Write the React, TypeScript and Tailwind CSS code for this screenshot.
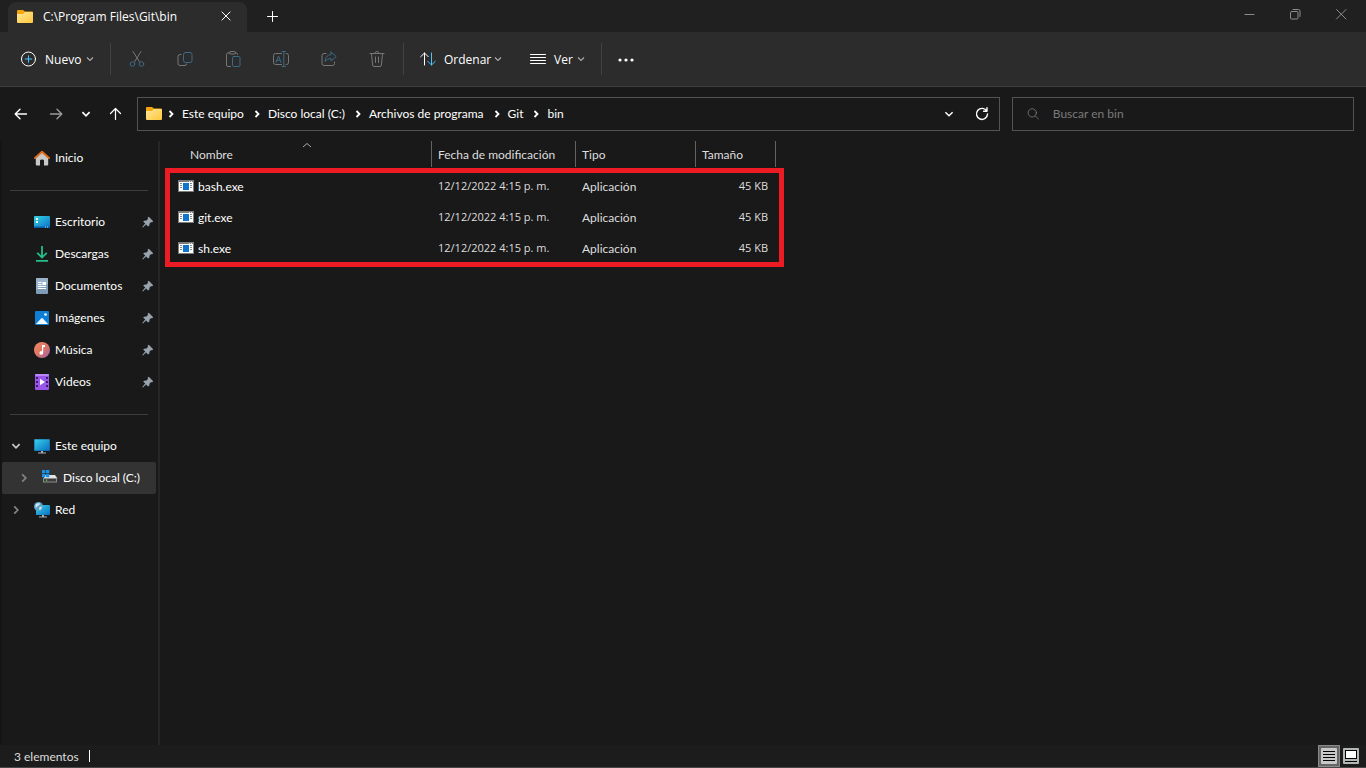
import React from "react";
import { clsx } from "clsx";

/**
 * File explorer window
 * ====================
 * Tab strip, command bar, address row, navigation pane and details list.
 */

type IconProps = { className?: string };

// Line icons share the same 16px frame
function Line({ className, children, width = 1 }: IconProps & { children: React.ReactNode; width?: number }) {
  return (
    <svg
      viewBox="0 0 16 16"
      className={clsx("shrink-0", className, !className?.includes("size-") && "size-4")}
      fill="none"
      stroke="currentColor"
      strokeWidth={width}
      strokeLinecap="round"
      strokeLinejoin="round"
      aria-hidden="true"
    >
      {children}
    </svg>
  );
}

function Chevron({ className, dir = "down", width = 1.2 }: IconProps & { dir?: "down" | "right" | "up"; width?: number }) {
  const paths = {
    down: "M2 3.5 5 6.5 8 3.5",
    right: "M3.5 2 6.5 5 3.5 8",
    up: "M1 6 5 2.5 9 6",
  };
  return (
    <svg
      viewBox="0 0 10 10"
      className={clsx("shrink-0", className, !className?.includes("size-") && "size-2.5")}
      fill="none"
      stroke="currentColor"
      strokeWidth={width}
      aria-hidden="true"
    >
      <path d={paths[dir]} />
    </svg>
  );
}

function FolderIcon() {
  return (
    <svg viewBox="0 0 16 14" className="h-3.5 w-4 shrink-0" aria-hidden="true">
      <defs>
        <linearGradient id="folder" x1="0" y1="0" x2="1" y2="1">
          <stop offset="0" stopColor="#ffe69a" />
          <stop offset="1" stopColor="#ffc73a" />
        </linearGradient>
      </defs>
      <path d="M0 1Q0 0 1 0H6L8 1.6H15Q16 1.6 16 2.6V6H0Z" fill="#f2a60c" />
      <path d="M0 4H6L8 2H15Q16 2 16 3V12Q16 13 15 13H1Q0 13 0 12Z" fill="url(#folder)" />
    </svg>
  );
}

// Command bar icons
const CutIcon = () => (
  <Line className="text-[#777]">
    <path d="M4 .5 10.3 10.6M12 .5 5.7 10.6" />
    <g stroke="#3a6a86">
      <circle cx="3.5" cy="13" r="2.3" />
      <circle cx="12.5" cy="13" r="2.3" />
    </g>
  </Line>
);

const CopyIcon = () => (
  <Line className="text-[#777]">
    <path d="M4 3.5H3Q1 3.5 1 5.5V12.5Q1 14.5 3 14.5H8Q9.5 14.5 9.5 13" />
    <rect x="6.5" y="1.5" width="8.5" height="10" rx="2" stroke="#3a6a86" />
  </Line>
);

const PasteIcon = () => (
  <Line className="text-[#777]">
    <path d="M5 2H3Q1.5 2 1.5 3.5V14Q1.5 15.5 3 15.5H5.5M10 2H11.5Q12.5 2 12.5 3.5" />
    <rect x="4.5" y=".5" width="6" height="2.5" rx="1" />
    <rect x="7.5" y="5.5" width="7.5" height="10" rx="1.2" stroke="#3a6a86" />
  </Line>
);

const RenameIcon = () => (
  <Line className="text-[#777]">
    <path d="M8.5 2.5H2.5Q.5 2.5 .5 4.5V11.5Q.5 13.5 2.5 13.5H8.5M13 2.5H13.5Q15.5 2.5 15.5 4.5V11.5Q15.5 13.5 13.5 13.5H13" />
    <path d="M3 11.5 5.5 5 8 11.5M3.8 9.3H7.2M10.8 .5V15.5M9 .5H12.5M9 15.5H12.5" stroke="#3a6a86" />
  </Line>
);

const ShareIcon = () => (
  <Line className="text-[#777]">
    <path d="M5 2.5H3Q1 2.5 1 4.5V12.5Q1 14.5 3 14.5H11.5Q13.5 14.5 13.5 12.5V11" />
    <path d="M10 1 15.2 5.5 10 10V7.5Q6.5 7.2 4 10.5 4.2 4.2 10 3.5Z" stroke="#3a6a86" />
  </Line>
);

const TrashIcon = () => (
  <Line className="text-[#777]">
    <path d="M1 2.5H15M5.8 2.5Q6 .5 8 .5T10.2 2.5M2.5 2.5 3.6 14Q3.8 15.5 5 15.5H11Q12.2 15.5 12.4 14L13.5 2.5M6.5 6V11.5M9.5 6V11.5" />
  </Line>
);

// Navigation pane icons
const HomeIcon = () => (
  <svg viewBox="0 0 16 16" className="size-4" aria-hidden="true">
    <path d="M1.8 7 8 1.5 14.2 7V14.5Q14.2 15.5 13.2 15.5H10V10.5Q10 9.5 8 9.5T6 10.5V15.5H2.8Q1.8 15.5 1.8 14.5Z" fill="#c9c9c9" />
    <path d="M1 8 8 1.7 15 8" fill="none" stroke="#e06a1b" strokeWidth="2" strokeLinecap="round" strokeLinejoin="round" />
  </svg>
);

const DesktopIcon = () => (
  <svg viewBox="0 0 16 16" className="size-4" aria-hidden="true">
    <defs>
      <linearGradient id="blue" x1="0" y1="0" x2="1" y2="1">
        <stop offset="0" stopColor="#36d3e6" />
        <stop offset="1" stopColor="#0b6fc4" />
      </linearGradient>
    </defs>
    <rect y="2" width="16" height="12" rx="1" fill="url(#blue)" />
    <path d="M2 4H4V6H2ZM2 7H4V9H2Z" fill="#e8fbff" />
    <path d="M0 12.5H16V13Q16 14 15 14H1Q0 14 0 13Z" fill="#0a5ba8" />
    <path d="M11 13H12M13 13H14" stroke="#9fe0f5" />
  </svg>
);

const DownloadsIcon = () => (
  <svg viewBox="0 0 16 16" className="size-4" fill="none" stroke="#25bd8a" strokeWidth="1.8" aria-hidden="true">
    <path d="M8 0V11.5M3.2 6.8 8 11.6 12.8 6.8M2 14.8H14" />
  </svg>
);

const DocumentsIcon = () => (
  <svg viewBox="0 0 16 16" className="size-4" aria-hidden="true">
    <rect x="2" width="12" height="16" rx="1" fill="#7f9bb8" />
    <path d="M2 1Q2 0 3 0H13Q14 0 14 1V6L2 12Z" fill="#9bb3ca" />
    <path d="M4 4.5H7.5M4 6.5H7.5M4 8.5H12M4 10.5H12" stroke="#fff" />
    <rect x="8.5" y="4" width="3.5" height="3" fill="#fff" />
  </svg>
);

const PicturesIcon = () => (
  <svg viewBox="0 0 16 16" className="size-4" aria-hidden="true">
    <rect x="1" y="1" width="14" height="14" rx="1" fill="#0f7fd6" />
    <path d="M2 14 7.2 8.4Q8 7.7 8.8 8.4L14 14Z" fill="#f2f8ff" />
    <circle cx="11.5" cy="4.5" r="1.3" fill="#fff" />
  </svg>
);

const MusicIcon = () => (
  <svg viewBox="0 0 16 16" className="size-4" aria-hidden="true">
    <defs>
      <linearGradient id="music" x1="0" y1="0" x2="1" y2="1">
        <stop offset="0" stopColor="#f0896a" />
        <stop offset=".5" stopColor="#dd7763" />
        <stop offset="1" stopColor="#9a5eb0" />
      </linearGradient>
    </defs>
    <circle cx="8" cy="8" r="8" fill="url(#music)" />
    <path d="M8 3H11V5H9.2V10.8A1.9 1.9 0 1 1 8 9.2Z" fill="#fff" />
  </svg>
);

const VideosIcon = () => (
  <svg viewBox="0 0 16 16" className="size-4" aria-hidden="true">
    <rect x="1" width="14" height="16" rx="1" fill="#9a55ea" />
    <rect x="1" width="14" height="2" rx="1" fill="#b887f5" />
    <path d="M2 3H4V5H2ZM2 7H4V9H2ZM2 11H4V13H2ZM12 3H14V5H12ZM12 7H14V9H12ZM12 11H14V13H12Z" fill="#3d1a78" />
    <path d="M6 4.8 11 8 6 11.2Z" fill="#fff" />
  </svg>
);

const ComputerIcon = () => (
  <svg viewBox="0 0 16 16" className="size-4" aria-hidden="true">
    <rect y="1" width="16" height="12" rx="1" fill="#14629c" />
    <rect x=".6" y="1.5" width="14.8" height="11" fill="url(#blue)" />
    <path d="M7 13H9V14.5H12V15.5H4V14.5H7Z" fill="#a7b0b8" />
  </svg>
);

const DriveIcon = () => (
  <svg viewBox="0 0 16 16" className="size-4" aria-hidden="true">
    <path d="M3.5 5H13L15.5 8.5H1.5Z" fill="#e4e4e4" />
    <path d="M0 0H3.3V3.3H0ZM4 0H7.3V3.3H4ZM0 4H3.3V7.3H0ZM4 4H7.3V7.3H4Z" fill="#1793ea" />
    <rect x="1" y="8" width="14" height="4.5" rx=".5" fill="#8c8c8c" />
    <rect x="2" y="9" width="12" height="2.5" fill="#3d3d3d" />
    <rect x="4" y="9.5" width="1.2" height="1.3" fill="#5fe04c" />
  </svg>
);

const NetworkIcon = () => (
  <svg viewBox="0 0 16 16" className="size-4" aria-hidden="true">
    <rect x="2" y="3" width="14" height="10" rx="1" fill="url(#blue)" />
    <path d="M8 13H10V14.5H13V15.5H5V14.5H8Z" fill="#a7b0b8" />
    <circle cx="4.5" cy="4.5" r="4.5" fill="#5aa3c8" />
    <path d="M1.5 2.5Q4 0 6 1.5 5.5 3.5 3.5 4 3 6 1.5 5.5ZM5.5 5 8 4.5 7 7.5 5 8Z" fill="#cfe8f2" />
  </svg>
);

const PinIcon = () => (
  <svg viewBox="0 0 12 12" className="size-3 shrink-0" aria-hidden="true">
    <path d="M6.8 .8 11.2 5.2 10.2 6.2 8.8 6.2 7.6 7.6 7.2 9.8 6.2 10.4 4 8.4 1.2 11.2 .4 11.4 .6 10.6 3.2 7.6 1.2 5.6 2 4.8 4.4 4.4 5.8 3.2 5.8 1.6Z" fill="#98a3ad" />
  </svg>
);

const ExeIcon = () => (
  <svg viewBox="0 0 16 14" className="h-3.5 w-4 shrink-0" shapeRendering="crispEdges" aria-hidden="true">
    <rect width="16" height="12" fill="#7d7d7d" />
    <path d="M11 1H12V2H11ZM13 1H14V2H13Z" fill="#ddd" />
    <rect x="1" y="2" width="14" height="9" fill="#fff" />
    <rect x="5" y="3" width="6" height="7" fill="#0e74cc" />
    <path d="M2 3.5H4M2 5.5H4M2 7.5H4M12 3.5H14M12 5.5H14M12 7.5H14" stroke="#8a8a8a" />
  </svg>
);

const editCommands = [
  { label: "Cortar", icon: CutIcon },
  { label: "Copiar", icon: CopyIcon },
  { label: "Pegar", icon: PasteIcon },
  { label: "Cambiar nombre", icon: RenameIcon },
  { label: "Compartir", icon: ShareIcon },
  { label: "Eliminar", icon: TrashIcon },
];

const crumbs = ["Este equipo", "Disco local (C:)", "Archivos de programa", "Git", "bin"];

const quickAccess = [
  { name: "Escritorio", icon: DesktopIcon },
  { name: "Descargas", icon: DownloadsIcon },
  { name: "Documentos", icon: DocumentsIcon },
  { name: "Imágenes", icon: PicturesIcon },
  { name: "Música", icon: MusicIcon },
  { name: "Videos", icon: VideosIcon },
];

const files = ["bash.exe", "git.exe", "sh.exe"].map((name) => ({
  name,
  date: "12/12/2022 4:15 p. m.",
  type: "Aplicación",
  size: "45 KB",
}));

function TitleBar() {
  return (
    <header className="flex h-8 shrink-0 items-end bg-[#202020] pl-2 font-['Open_Sans',sans-serif]">
      <div className="flex h-[30px] w-[239px] items-center rounded-t-lg bg-[#2c2c2c] pr-4 pl-[9px]">
        <FolderIcon />
        <span className="ml-2.5 flex-1 font-medium text-white">C:\Program Files\Git\bin</span>
        <button aria-label="Cerrar pestaña" className="pb-0.5 text-white">
          <Line className="size-2.5" width={1.6}>
            <path d="M1.5 1.5 14.5 14.5M14.5 1.5 1.5 14.5" />
          </Line>
        </button>
      </div>
      <button aria-label="Nueva pestaña" className="ml-4.5 flex h-[30px] items-center text-white">
        <Line>
          <path d="M7.5 2.5V12.5M2.5 7.5H12.5" />
        </Line>
      </button>
      <div className="ml-auto flex h-8 items-center gap-[30px] pr-[17px] pb-1 text-[#8b8b8b]">
        <button aria-label="Minimizar">
          <Line>
            <path d="M4 8.5H13" />
          </Line>
        </button>
        <button aria-label="Restaurar">
          <Line>
            <rect x="3.5" y="5.5" width="7.5" height="7.5" rx="1" />
            <path d="M6 3.5H11.5Q13 3.5 13 5V10.5" />
          </Line>
        </button>
        <button aria-label="Cerrar">
          <Line>
            <path d="M3.5 3.5 13 13M13 3.5 3.5 13" />
          </Line>
        </button>
      </div>
    </header>
  );
}

const Divider = () => <span className="h-8 w-px bg-[#424242]" />;

function CommandBar() {
  return (
    <div className="flex h-[55px] shrink-0 items-center border-b border-[#3d3d3d] bg-[#2c2c2c] pl-[21px] font-['Open_Sans',sans-serif] font-medium text-white">
      <button className="flex items-center">
        <Line>
          <circle cx="7.5" cy="8" r="7" />
          <path d="M7.5 4.7V11.3M4.2 8H10.8" stroke="#4cc2ff" />
        </Line>
        <span className="ml-2 w-10 pt-px text-left">Nuevo</span>
        <Chevron className="text-[#aaa]" />
      </button>
      <div className="ml-[15px] flex">
        <Divider />
      </div>
      <div className="flex gap-8 px-[18px]">
        {editCommands.map(({ label, icon: Icon }) => (
          <button key={label} aria-label={label} disabled>
            <Icon />
          </button>
        ))}
      </div>
      <Divider />
      <button className="ml-4 flex items-center">
        <Line>
          <path d="M4.5 14V2M.7 5.7 4.5 2 8.2 5.7" />
          <path d="M11.5 2V14M7.8 10.3 11.5 14 15.3 10.3" stroke="#4cc2ff" />
        </Line>
        <span className="ml-2 w-[49px] pt-px text-left">Ordenar</span>
        <Chevron className="text-[#aaa]" />
      </button>
      <button className="ml-[27px] flex items-center">
        <Line>
          <path d="M.5 3.5H15.5M.5 6.5H15.5M.5 9.5H15.5M.5 12.5H15.5" />
        </Line>
        <span className="ml-2 w-[22px] pt-px text-left">Ver</span>
        <Chevron className="text-[#aaa]" />
      </button>
      <div className="mr-4 ml-[15px] flex">
        <Divider />
      </div>
      <button aria-label="Ver más">
        <svg viewBox="0 0 16 16" className="size-4" fill="currentColor" aria-hidden="true">
          <circle cx="2" cy="9" r="1.6" />
          <circle cx="8" cy="9" r="1.6" />
          <circle cx="14" cy="9" r="1.6" />
        </svg>
      </button>
    </div>
  );
}

function AddressRow() {
  return (
    <div className="flex h-[54px] shrink-0 items-center px-3 text-white">
      <button aria-label="Atrás">
        <Line width={1.4}>
          <path d="M14.5 8H3.5M8 3.2 3.2 8 8 12.8" />
        </Line>
      </button>
      <button aria-label="Adelante" className="ml-5 text-[#999]">
        <Line width={1.4}>
          <path d="M2.5 8H13.5M9 3.2 13.8 8 9 12.8" />
        </Line>
      </button>
      <button aria-label="Ubicaciones recientes" className="ml-4">
        <Chevron className="size-3" width={1.4} />
      </button>
      <button aria-label="Arriba" className="ml-[15px]">
        <Line width={1.2}>
          <path d="M8.5 13.5V2.5M3.5 7.5 8.5 2.5 13.5 7.5" />
        </Line>
      </button>
      <div className="ml-3.5 flex h-[34px] flex-1 items-center border border-[#535353] pr-[9px] pl-2">
        <FolderIcon />
        <nav aria-label="Ruta" className="flex flex-1 items-center">
          {crumbs.map((crumb) => (
            <React.Fragment key={crumb}>
              <Chevron dir="right" width={1.8} className="mr-1.5 ml-1" />
              <a href="#" className="mr-1 whitespace-nowrap">
                {crumb}
              </a>
            </React.Fragment>
          ))}
        </nav>
        <button aria-label="Ubicaciones anteriores">
          <Chevron className="size-3" />
        </button>
        <button aria-label="Actualizar" className="ml-[19px]">
          <Line width={1.4}>
            <path d="M12.8 5.2A5.5 5.5 0 1 0 13.5 8M13 1.8V5.2H9.6" />
          </Line>
        </button>
      </div>
      <label className="ml-3 flex h-[34px] w-[25.5%] shrink-0 items-center border border-[#535353] px-3.5 text-[#858585]">
        <Line className="size-3">
          <circle cx="7" cy="6.5" r="5.5" />
          <path d="M11 10.5 15.5 15" />
        </Line>
        <input
          type="search"
          aria-label="Buscar en bin"
          placeholder="Buscar en bin"
          className="ml-3.5 w-full bg-transparent outline-none placeholder:text-[#7a7a7a]"
        />
      </label>
    </div>
  );
}

type NavItemProps = {
  name: string;
  icon: React.ElementType;
  pinned?: boolean;
  expand?: "down" | "right";
  nested?: boolean;
  selected?: boolean;
};

function NavItem({ name, icon: Icon, pinned, expand, nested, selected }: NavItemProps) {
  return (
    <a
      href="#"
      className={clsx(
        "mr-0.5 flex h-8 items-center rounded-xs pr-0.5 text-white",
        nested ? "pl-4" : "pl-2",
        selected && "bg-[#333]"
      )}
    >
      <span className="flex w-6">
        {expand && <Chevron dir={expand} width={1.4} className={clsx("size-3", expand === "right" ? "text-[#858585]" : "text-[#ccc]")} />}
      </span>
      <Icon />
      <span className="ml-[5px] flex-1 whitespace-nowrap">{name}</span>
      {pinned && <PinIcon />}
    </a>
  );
}

function Sidebar() {
  return (
    <aside className="w-40 shrink-0 border-l-2 border-[#141414]">
      <div className="h-full border-r-2 border-[#262626] pt-px">
        <NavItem name="Inicio" icon={HomeIcon} />
        <hr className="mt-4 mr-2.5 mb-[15px] ml-2 border-[#3d3d3d]" />
        {quickAccess.map((item) => (
          <NavItem key={item.name} {...item} pinned />
        ))}
        <hr className="mt-4 mr-2.5 mb-[15px] ml-2 border-[#3d3d3d]" />
        <NavItem name="Este equipo" icon={ComputerIcon} expand="down" />
        <NavItem name="Disco local (C:)" icon={DriveIcon} expand="right" nested selected />
        <NavItem name="Red" icon={NetworkIcon} expand="right" />
      </div>
    </aside>
  );
}

function FileList() {
  const head = "flex h-[26px] items-center border-r border-[#636363] pt-0.5";
  const numeric = "p-0 font-['Open_Sans',sans-serif] text-[11px]";
  return (
    <main className="min-w-0 flex-1">
      <div className="relative w-[616px]">
        <table className="w-full table-fixed text-left text-[#dedede]">
          <thead>
            <tr className="h-[30px] align-top">
              <th className="w-[272px] p-0 font-normal">
                <div className={clsx(head, "relative pl-[30px]")}>
                  Nombre
                  <Chevron dir="up" width={1} className="absolute top-0 left-[142px] text-[#aaa]" />
                </div>
              </th>
              <th className="w-36 p-0 font-normal">
                <div className={clsx(head, "pl-1.5")}>Fecha de modificación</div>
              </th>
              <th className="w-[120px] p-0 font-normal">
                <div className={clsx(head, "pl-1.5")}>Tipo</div>
              </th>
              <th className="w-20 p-0 font-normal">
                <div className={clsx(head, "pl-1.5")}>Tamaño</div>
              </th>
            </tr>
          </thead>
          <tbody>
            {files.map((file) => (
              <tr key={file.name} className="h-[31px]">
                <td className="p-0 pl-[18px] text-white">
                  <span className="flex items-center gap-1">
                    <ExeIcon />
                    {file.name}
                  </span>
                </td>
                <td className={clsx(numeric, "pl-1.5")}>{file.date}</td>
                <td className="p-0 pl-1.5">{file.type}</td>
                <td className={clsx(numeric, "pr-2 text-right")}>{file.size}</td>
              </tr>
            ))}
          </tbody>
        </table>
        {/* Red frame around the rows */}
        <div className="pointer-events-none absolute top-[27px] -right-2 -bottom-[3px] left-[5px] border-5 border-[#ed1c24]" />
      </div>
    </main>
  );
}

function StatusBar() {
  return (
    <footer className="flex h-[23px] shrink-0 items-center border-b border-[#484848] bg-[#1c1c1c] pr-[7px] pl-3.5 text-[#dedede]">
      <span className="pt-0.5">3 elementos</span>
      <span className="ml-2.5 h-3 w-px bg-white" />
      <div className="ml-auto flex items-center gap-[3px]">
        <button aria-label="Detalles" className="flex h-[22px] w-[22px] items-center justify-center border border-[#8a8a8a] bg-[#666]">
          <svg viewBox="0 0 16 16" className="size-4" aria-hidden="true">
            <rect width="16" height="16" rx="1" fill="#c8c8c8" />
            <path d="M2 3.5H14M2 6.5H14M2 9.5H14M2 12.5H14" stroke="#000" />
          </svg>
        </button>
        <button aria-label="Iconos grandes">
          <svg viewBox="0 0 16 16" className="size-4" aria-hidden="true">
            <rect width="16" height="16" rx="1" fill="#b4b8b4" />
            <rect x="2.5" y="2.5" width="11" height="8" fill="#fff" stroke="#000" />
            <path d="M2 13.5H14" stroke="#000" />
          </svg>
        </button>
      </div>
    </footer>
  );
}

export default function App() {
  return (
    <div className="flex h-screen flex-col bg-[#191919] font-[Lato,sans-serif] text-xs">
      <TitleBar />
      <CommandBar />
      <AddressRow />
      <div className="flex min-h-0 flex-1">
        <Sidebar />
        <FileList />
      </div>
      <StatusBar />
    </div>
  );
}
